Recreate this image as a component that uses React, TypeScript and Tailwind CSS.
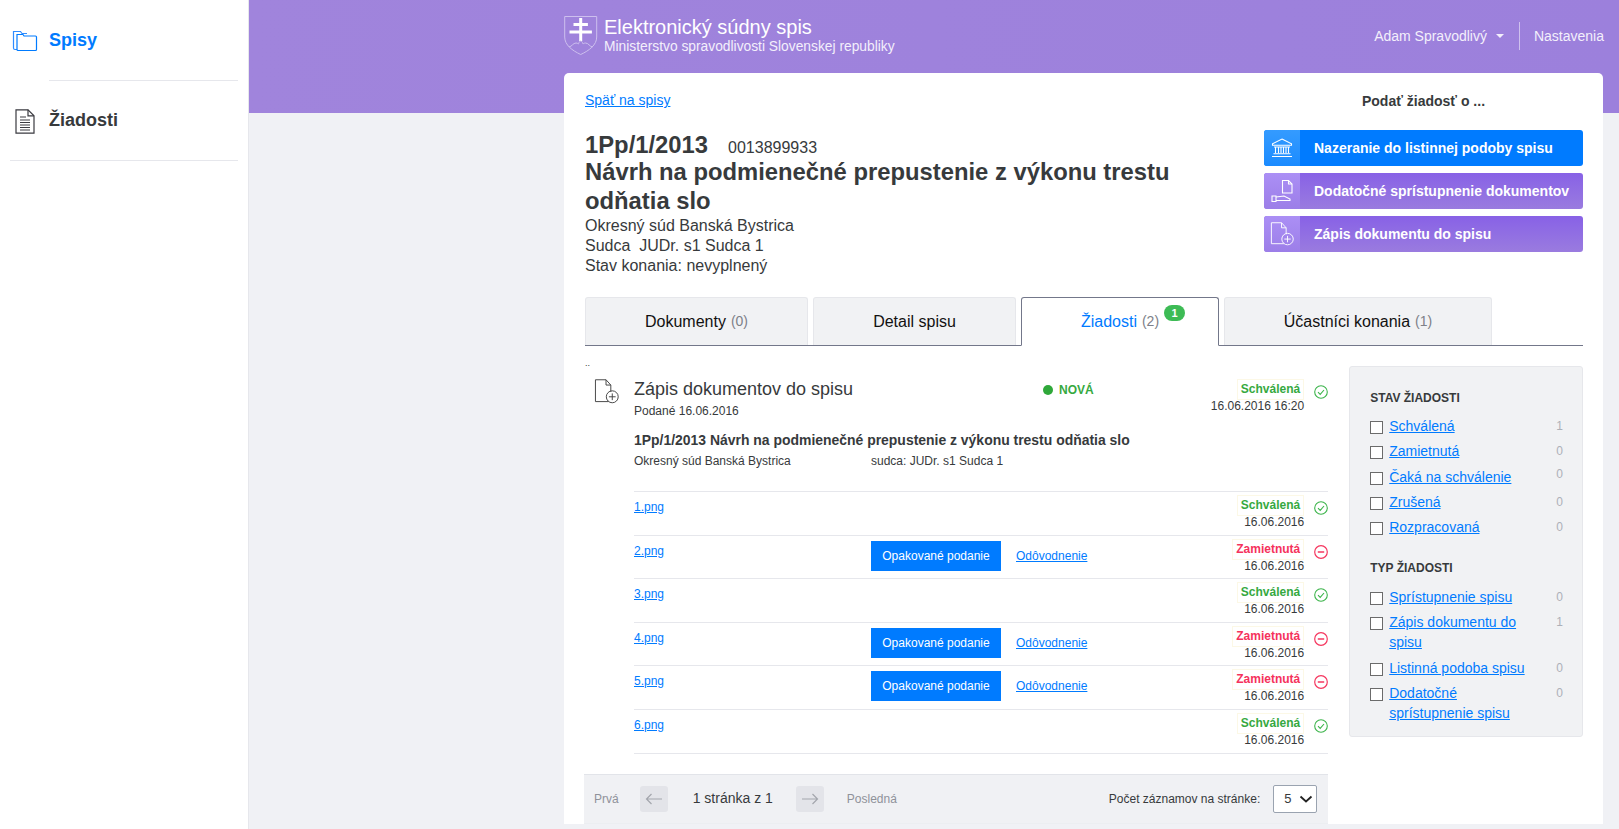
import React from "react";

const FolderIcon = () => (
  <svg width="26" height="22" viewBox="0 0 26 22" fill="none" stroke="#2f8cff" strokeWidth="1.2">
    <path d="M5 19.500H3a1.500 1.500 0 0 1-1.500-1.500V1.500h7l1.500 2h5" />
    <path d="M6 20.500a1 1 0 0 1-1-1V4.500h6l1 1.500h11.500a1 1 0 0 1 1 1v12.500a1 1 0 0 1-1 1z" stroke="#007bff" />
  </svg>
);

const DocLinesIcon = () => (
  <svg width="20" height="25" viewBox="0 0 20 25" fill="none" stroke="#3a3a40" strokeWidth="1.2">
    <path d="M1 .8h12l6 6v17.400H1z" />
    <path d="M13 .8v6h6" />
    <path d="M5 8h6M5 11h10M5 13.500h10M5 16h10M5 18.500h10M5 21h10" />
  </svg>
);

const DocPlusIcon = ({ color = "#444", size = 25 }: { color?: string; size?: number }) => (
  <svg width={size} height={size} viewBox="0 0 26 26" fill="none" stroke={color} strokeWidth="1">
    <path d="M15 23.500H1.500V.8h11l5 5.500v7" />
    <path d="M12.500 .8v5.500h5" />
    <circle cx="19" cy="18.500" r="6.200" />
    <path d="M19 15v7M15.500 18.500h7" />
  </svg>
);

const BankIcon = () => (
  <svg width="22" height="20" viewBox="0 0 22 20" fill="none" stroke="#fff" strokeWidth="1.100">
    <path d="M11 1 20.500 5.800v1.400H1.500V5.800z" />
    <path d="M3 9h16M4.500 9.500v5.500M7.500 9.500v5.500M10 9.500v5.500M12.500 9.500v5.500M15 9.500v5.500M17.500 9.500v5.500M2.500 15.800h17M1 18.500h20" />
  </svg>
);

const HandDocIcon = () => (
  <svg width="22" height="24" viewBox="0 0 22 24" fill="none" stroke="#fff" strokeWidth="1.100">
    <path d="M11.500 14V1.500h6l3.500 3.500v9z" />
    <path d="M17.500 1.500V5h3.500" />
    <path d="M1 17h4v5.500H1z" />
    <path d="M5 18l8-1 6 3v1.500H5" />
  </svg>
);

const CheckCircle = () => (
  <svg width="14" height="14" viewBox="0 0 14 14" fill="none" stroke="#3cb44b" strokeWidth="1.100">
    <circle cx="7" cy="7" r="6.300" />
    <path d="M4 7.200 6.200 9.400 10 5" />
  </svg>
);

const MinusCircle = () => (
  <svg width="14" height="14" viewBox="0 0 14 14" fill="none" stroke="#f5375f" strokeWidth="1.200">
    <circle cx="7" cy="7" r="6.300" />
    <path d="M3.800 7h6.400" strokeWidth="1.500" />
  </svg>
);

const Arrow = ({ right }: { right?: boolean }) => (
  <svg width="18" height="12" viewBox="0 0 18 12" fill="none" stroke="#a3a6ad" strokeWidth="1.200">
    {right ? <path d="M1 6h15.500M11.500 1l5 5-5 5" /> : <path d="M17 6H1.500M6.500 1l-5 5 5 5" />}
  </svg>
);

const Emblem = () => (
  <svg width="34" height="41" viewBox="0 0 34 41" fill="none">
    <path d="M.7 1.500h32v20.500c0 8-7.500 13.500-16 17.500C8.200 35.500.7 30 .7 22z" stroke="#cdbfee" strokeWidth="1" />
    <path d="M16.700 3v23M9.500 9.500h14.400M5.500 17h22.400" stroke="#fff" strokeWidth="3" />
    <path d="M5 32c3-.5 4-4 7-4 1.500 0 2.500 1 2.500 1s.7-3 2.200-3 2.300 3 2.300 3 1-1 2.500-1c3 0 4 3.500 7 4" stroke="#cdbfee" strokeWidth="1" />
  </svg>
);

const Status = ({ ok, date, time }: { ok: boolean; date: string; time?: string }) => (
  <div className="flex items-start gap-[10px]">
    <div className="flex flex-col items-end text-[12px] leading-[15px]">
      <span
        className={`border border-[#fcf8e6] px-[3px] py-[2px] font-bold ${ok ? "text-[#36a93f]" : "text-[#f5325c]"}`}
      >
        {ok ? "Schválená" : "Zamietnutá"}
      </span>
      <span className="-mt-[1px] text-[#373a3c]">
        {date}
        {time ? ` ${time}` : ""}
      </span>
    </div>
    <div className="mt-[6px] w-[14px]">{ok ? <CheckCircle /> : <MinusCircle />}</div>
  </div>
);

const files = [
  { name: "1.png", ok: true },
  { name: "2.png", ok: false },
  { name: "3.png", ok: true },
  { name: "4.png", ok: false },
  { name: "5.png", ok: false },
  { name: "6.png", ok: true },
];

const stateFilters = [
  { label: "Schválená", count: 1 },
  { label: "Zamietnutá", count: 0 },
  { label: "Čaká na schválenie", count: 0, raised: true },
  { label: "Zrušená", count: 0 },
  { label: "Rozpracovaná", count: 0 },
];

const typeFilters = [
  { label: "Sprístupnenie spisu", count: 0 },
  { label: "Zápis dokumentu do spisu", count: 1 },
  { label: "Listinná podoba spisu", count: 0 },
  { label: "Dodatočné sprístupnenie spisu", count: 0 },
];

const FilterRow = ({ label, count, raised }: { label: string; count: number; raised?: boolean }) => (
  <div className="mb-[5.3px] flex items-start">
    <span className="mt-[5px] h-[13px] w-[13px] shrink-0 border border-[#6b6b6b] bg-white" />
    <a href="#" className="ml-[6px] w-[148px] text-[14px] leading-[20px] text-[#007bff] underline">
      {label}
    </a>
    <span className={`ml-auto mr-[19px] text-[12px] leading-[20px] text-[#adb0b8] ${raised ? "-mt-[3px]" : ""}`}>
      {count}
    </span>
  </div>
);

const ActionButton = ({
  icon,
  label,
  blue,
}: {
  icon: React.ReactNode;
  label: string;
  blue?: boolean;
}) => (
  <button
    className={`flex h-[36px] w-[319px] items-center overflow-hidden rounded-[3px] text-left text-[14px] font-bold text-white ${
      blue ? "bg-[#007bff]" : "bg-gradient-to-b from-[#8861e6] to-[#9a7bdf]"
    }`}
  >
    <span
      className={`flex h-full w-[36px] items-center justify-center ${
        blue ? "bg-gradient-to-b from-[#349bff] to-[#1a8bff]" : "bg-gradient-to-b from-[#ab8ff5] to-[#9c7ee8]"
      }`}
    >
      {icon}
    </span>
    <span className="ml-[14px]">{label}</span>
  </button>
);

const Tab = ({
  label,
  count,
  width,
  active,
}: {
  label: string;
  count?: number;
  width: string;
  active?: boolean;
}) => (
  <div
    className={`relative flex items-center justify-center rounded-t-[3px] border text-[16px] ${width} ${
      active
        ? "z-10 -mb-[1px] h-[49px] border-[#73778a] border-b-white bg-white text-[#007bff]"
        : "h-[48px] border-[#e6e7eb] border-b-0 bg-[#f1f2f4] text-[#111]"
    }`}
  >
    {label}
    {count !== undefined && <span className="ml-[5px] text-[14px] text-[#7d8088]">({count})</span>}
    {active && (
      <span className="absolute left-[142px] top-[7px] flex h-[16px] w-[21px] items-center justify-center rounded-full bg-[#3dbb55] text-[11px] font-bold text-white">
        1
      </span>
    )}
  </div>
);

export default function App() {
  return (
    <div className="flex h-screen overflow-hidden bg-[#f0f1f5] font-['Liberation_Sans',Arial,sans-serif] text-[#373a3c]">
      {/* Sidebar */}
      <aside className="w-[249px] shrink-0 border-r border-[#e6e7ec] bg-white px-[10px]">
        <div className="flex h-[81px]">
          <div className="w-[39px] shrink-0 pt-[30px] pl-[2px]">
            <FolderIcon />
          </div>
          <div className="flex-1 border-b border-[#e6e7ec] pt-[29px] text-[18px] font-bold leading-[22px] text-[#007bff]">
            Spisy
          </div>
        </div>
        <div className="flex h-[80px] border-b border-[#e6e7ec]">
          <div className="w-[39px] shrink-0 pt-[28px] pl-[5px]">
            <DocLinesIcon />
          </div>
          <div className="pt-[28px] text-[18px] font-bold leading-[22px]">Žiadosti</div>
        </div>
      </aside>

      <div className="min-w-0 flex-1">
        {/* Top band */}
        <header className="flex h-[113px] items-start bg-gradient-to-r from-[#a084dc] to-[#9c80dc] pl-[315px] pr-[15px] text-white">
          <div className="mt-[15px] flex">
            <Emblem />
            <div className="ml-[6px]">
              <div className="text-[20px] leading-[24px]">Elektronický súdny spis</div>
              <div className="text-[13.8px] leading-[16px] text-[#f3effb]">
                Ministerstvo spravodlivosti Slovenskej republiky
              </div>
            </div>
          </div>
          <div className="ml-auto mt-[22px] flex items-center text-[14px] text-[#f3effb]">
            <span>Adam Spravodlivý</span>
            <span className="ml-[9px] h-0 w-0 border-x-[4px] border-t-[4px] border-x-transparent border-t-[#f3effb]" />
            <span className="ml-[15px] mr-[14px] h-[28px] w-px bg-[#cfc1ee]" />
            <span>Nastavenia</span>
          </div>
        </header>

        {/* Card */}
        <main className="-mt-[40px] ml-[315px] mr-[16px] rounded-t-[5px] bg-white pl-[21px] pr-[20px] pt-[15px]">
          <div className="flex justify-between">
            <div className="w-[600px]">
              <a href="#" className="text-[14px] leading-[16px] text-[#007bff] underline">
                Späť na spisy
              </a>
              <div className="mt-[18px] flex h-[27px] items-baseline">
                <span className="text-[23.8px] font-bold leading-[29px]">1Pp/1/2013</span>
                <span className="ml-[20px] text-[16px]">0013899933</span>
              </div>
              <h1 className="mb-[1px] text-[23.8px] font-bold leading-[29px]">
                Návrh na podmienečné prepustenie z výkonu trestu odňatia slo
              </h1>
              <div className="text-[16px] leading-[20px]">
                <div>Okresný súd Banská Bystrica</div>
                <div>Sudca&nbsp; JUDr. s1 Sudca 1</div>
                <div>Stav konania: nevyplnený</div>
              </div>
            </div>
            <div className="w-[319px]">
              <div className="mt-[5px] text-center text-[14px] font-bold leading-[16px]">Podať žiadosť o ...</div>
              <div className="mt-[21px] flex flex-col gap-[7px]">
                <ActionButton blue icon={<BankIcon />} label="Nazeranie do listinnej podoby spisu" />
                <ActionButton icon={<HandDocIcon />} label="Dodatočné sprístupnenie dokumentov" />
                <ActionButton icon={<DocPlusIcon color="#fff" size={24} />} label="Zápis dokumentu do spisu" />
              </div>
            </div>
          </div>

          {/* Tabs */}
          <div className="mt-[21px] flex items-end gap-[5px] border-b border-[#73778a]">
            <Tab label="Dokumenty" count={0} width="w-[223px]" />
            <Tab label="Detail spisu" width="w-[203px]" />
            <Tab label="Žiadosti" count={2} width="w-[198px]" active />
            <Tab label="Účastníci konania" count={1} width="w-[268px]" />
          </div>

          <div className="flex">
            <div className="w-[744px]">
              <div className="h-[33px] pt-[11px] text-[9px] leading-[12px]">..</div>
              <div className="flex">
                <div className="w-[49px] shrink-0 pl-[9px]">
                  <DocPlusIcon />
                </div>
                <div className="min-w-0 flex-1">
                  <div className="flex items-start">
                    <div className="w-[409px]">
                      <div className="text-[18px] leading-[21px]">Zápis dokumentov do spisu</div>
                      <div className="text-[12px] leading-[22px]">Podané 16.06.2016</div>
                    </div>
                    <div className="flex items-center pt-[2px] text-[12px] font-bold text-[#36a93f]">
                      <span className="h-[10px] w-[10px] rounded-full bg-[#2fa83a]" />
                      <span className="ml-[6px]">NOVÁ</span>
                    </div>
                    <div className="ml-auto">
                      <Status ok date="16.06.2016" time="16:20" />
                    </div>
                  </div>
                  <div className="mt-[8px] text-[13.95px] font-bold leading-[20px]">
                    1Pp/1/2013 Návrh na podmienečné prepustenie z výkonu trestu odňatia slo
                  </div>
                  <div className="mt-[1px] flex text-[12px] leading-[20px]">
                    <div className="w-[237px]">Okresný súd Banská Bystrica</div>
                    <div>sudca: JUDr. s1 Sudca 1</div>
                  </div>
                </div>
              </div>

              {/* Files */}
              <div className="mt-[20px] ml-[49px] border-b border-[#e6e7ec]">
                {files.map((f) => (
                  <div key={f.name} className="flex h-[43.6px] items-start border-t border-[#e6e7ec] pt-[1px]">
                    <a href="#" className="w-[237px] pt-[7px] text-[12px] leading-[15px] text-[#007bff] underline">
                      {f.name}
                    </a>
                    {!f.ok && (
                      <div className="mt-[4px] flex items-center">
                        <button className="h-[30px] w-[130px] bg-[#007bff] text-[12px] text-white">
                          Opakované podanie
                        </button>
                        <a href="#" className="ml-[15px] text-[12px] text-[#007bff] underline">
                          Odôvodnenie
                        </a>
                      </div>
                    )}
                    <div className="ml-auto pt-[2px]">
                      <Status ok={f.ok} date="16.06.2016" />
                    </div>
                  </div>
                ))}
              </div>

              {/* Pager */}
              <div className="-ml-[1px] mt-[20px] flex h-[50px] items-center border-y border-[#e2e4e9] border-b-[#eceef1] bg-[#f0f1f4] pl-[10px] pr-[11px] text-[12px]">
                <span className="text-[#8f929a]">Prvá</span>
                <span className="ml-[21px] flex h-[26px] w-[28px] items-center justify-center rounded-[3px] bg-[#e3e4e9]">
                  <Arrow />
                </span>
                <span className="ml-[25px] text-[14px] text-[#373a3c]">1 stránka z 1</span>
                <span className="ml-[23px] flex h-[26px] w-[28px] items-center justify-center rounded-[3px] bg-[#e3e4e9]">
                  <Arrow right />
                </span>
                <span className="ml-[23px] text-[#8f929a]">Posledná</span>
                <span className="ml-auto text-[#373a3c]">Počet záznamov na stránke:</span>
                <span className="ml-[13px] flex h-[28px] w-[44px] items-center justify-between rounded-[2px] border border-[#9aa3b0] bg-white pl-[10px] pr-[3px] text-[13px]">
                  5
                  <svg width="14" height="8" viewBox="0 0 14 8" fill="none" stroke="#222" strokeWidth="1.800">
                    <path d="M1.500 1.500 7 6.500l5.500-5" />
                  </svg>
                </span>
              </div>
            </div>

            {/* Filter panel */}
            <aside className="ml-[21px] mt-[20px] h-[371px] w-[234px] rounded-[3px] border border-[#e6e7eb] bg-[#f1f2f4] pl-[20px] pt-[23px]">
              <div className="text-[12px] font-bold leading-[16px]">STAV ŽIADOSTI</div>
              <div className="mt-[10px]">
                {stateFilters.map((f) => (
                  <FilterRow key={f.label} {...f} />
                ))}
              </div>
              <div className="mt-[23px] text-[12px] font-bold leading-[16px]">TYP ŽIADOSTI</div>
              <div className="mt-[11px]">
                {typeFilters.map((f) => (
                  <FilterRow key={f.label} {...f} />
                ))}
              </div>
            </aside>
          </div>
        </main>
      </div>
    </div>
  );
}
